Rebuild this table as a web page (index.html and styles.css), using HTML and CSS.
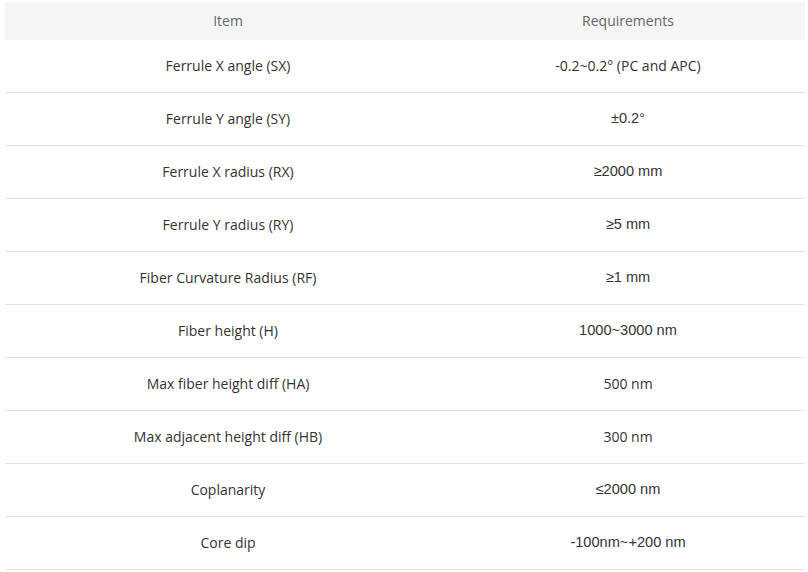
FILE: index.html
```html
<!DOCTYPE html>
<html>
<head>
<meta charset="utf-8">
<link rel="stylesheet" href="styles.css">
</head>
<body>
<table class="spec">
  <colgroup><col class="c1"><col class="c2"></colgroup>
  <thead>
    <tr><th>Item</th><th>Requirements</th></tr>
  </thead>
  <tbody>
    <tr><td>Ferrule X angle (SX)</td><td>-0.2~0.2° (PC and APC)</td></tr>
    <tr><td>Ferrule Y angle (SY)</td><td class="num">±0.2°</td></tr>
    <tr><td>Ferrule X radius (RX)</td><td class="num">≥2000 mm</td></tr>
    <tr><td>Ferrule Y radius (RY)</td><td class="num">≥5 mm</td></tr>
    <tr><td>Fiber Curvature Radius (RF)</td><td class="num">≥1 mm</td></tr>
    <tr><td>Fiber height (H)</td><td class="num">1000~3000 nm</td></tr>
    <tr><td>Max fiber height diff (HA)</td><td>500 nm</td></tr>
    <tr><td>Max adjacent height diff (HB)</td><td>300 nm</td></tr>
    <tr><td>Coplanarity</td><td class="num">≤2000 nm</td></tr>
    <tr><td>Core dip</td><td class="num">-100nm~+200 nm</td></tr>
  </tbody>
</table>
</body>
</html>
```
FILE: styles.css
```css
body {
  margin: 2px 3px 0 5px;
  background: #fff;
  font-family: "Open Sans", "Noto Sans", sans-serif;
  font-size: 14px;
  color: #333;
}
.spec {
  width: 800px;
  border-collapse: collapse;
  table-layout: fixed;
}
.c1 { width: 446px; }
.c2 { width: 354px; }
.spec th {
  background: #f5f5f5;
  color: #666;
  font-weight: normal;
  height: 36px;
  padding: 0 0 2px;
  text-align: center;
  vertical-align: middle;
}
.spec td {
  height: 50px;
  padding: 0 0 2px;
  text-align: center;
  vertical-align: middle;
  border-bottom: 1px solid #e3e3e3;
}
.spec td.num {
  font-family: "Liberation Sans", Arial, sans-serif;
  font-size: 14.6px;
}
```
